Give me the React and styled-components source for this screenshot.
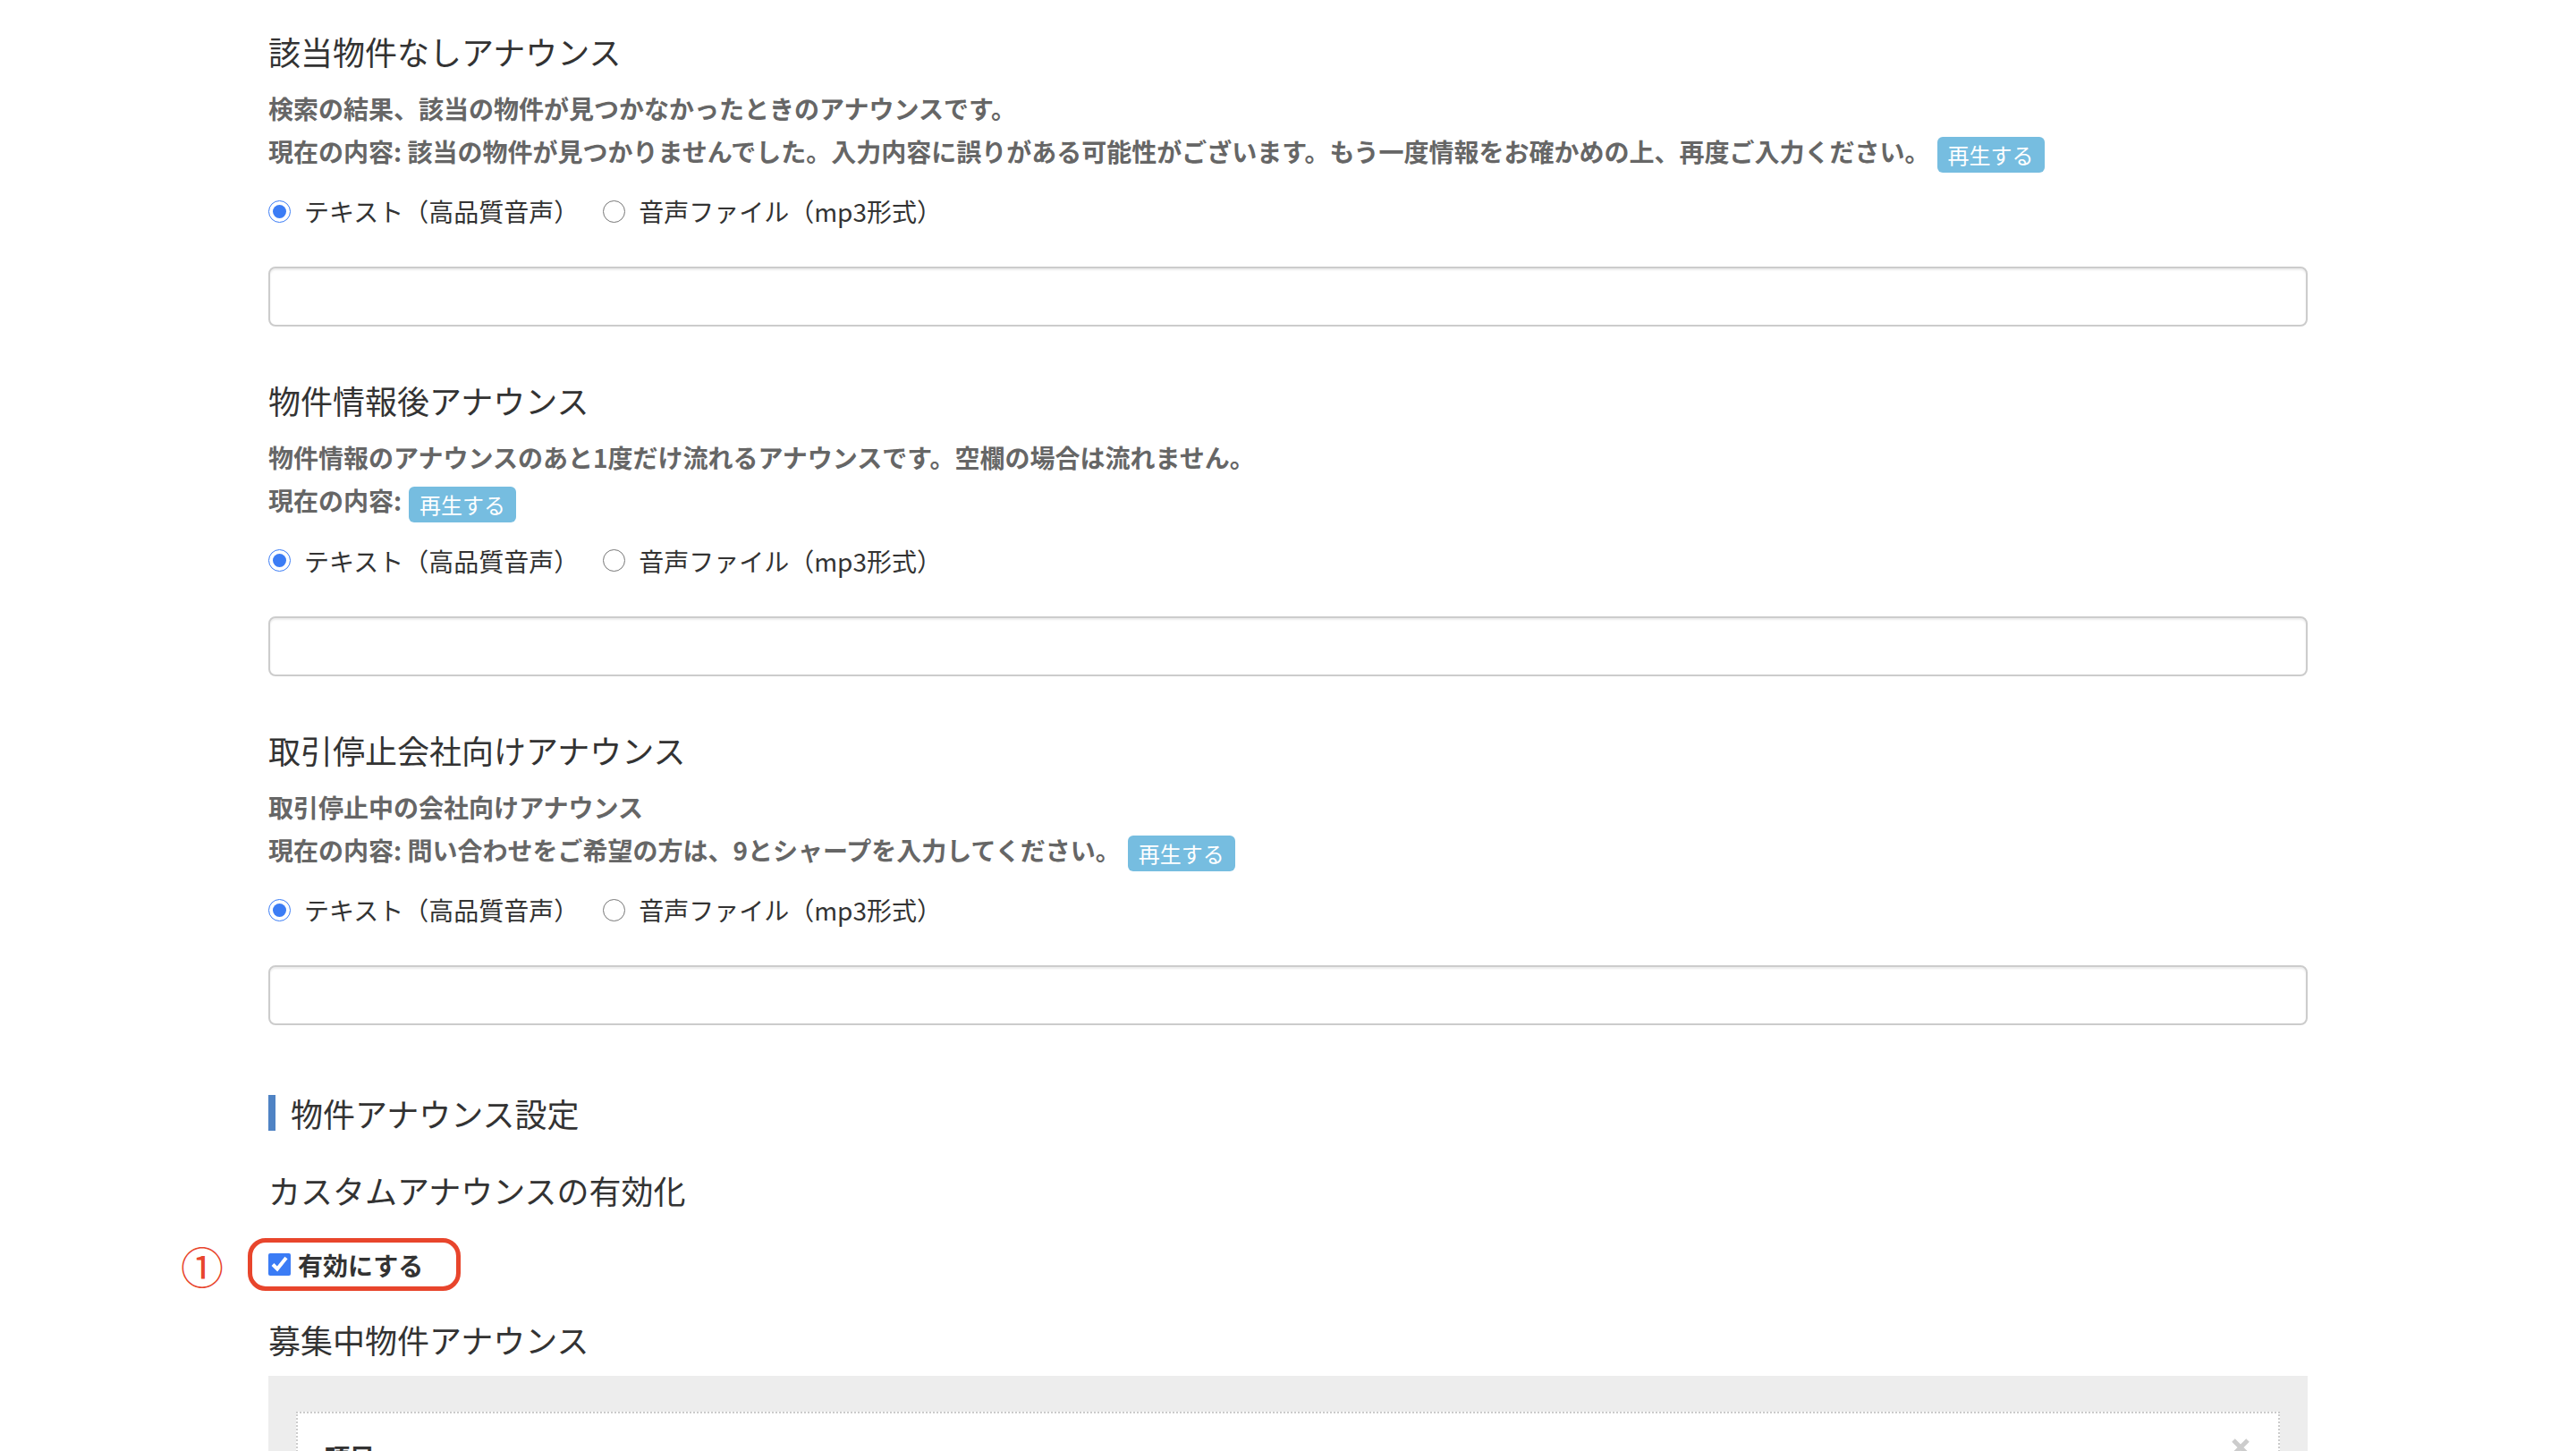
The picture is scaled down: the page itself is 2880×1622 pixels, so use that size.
import React from 'react';
import styled, { createGlobalStyle } from 'styled-components';

const GlobalStyle = createGlobalStyle`
  body {
    margin: 0;
    background: #fff;
    font-family: "Noto Sans CJK JP", "Noto Sans", sans-serif;
    color: #333;
  }
`;

const sections = [
  {
    title: '該当物件なしアナウンス',
    desc: '検索の結果、該当の物件が見つかなかったときのアナウンスです。',
    current: '該当の物件が見つかりませんでした。入力内容に誤りがある可能性がございます。もう一度情報をお確かめの上、再度ご入力ください。',
  },
  {
    title: '物件情報後アナウンス',
    desc: '物件情報のアナウンスのあと1度だけ流れるアナウンスです。空欄の場合は流れません。',
    current: '',
  },
  {
    title: '取引停止会社向けアナウンス',
    desc: '取引停止中の会社向けアナウンス',
    current: '問い合わせをご希望の方は、9とシャープを入力してください。',
  },
];

const AnnounceSection = ({ title, desc, current, name }) => (
  <Section>
    <Title>{title}</Title>
    <Desc>
      <Line>{desc}</Line>
      <Line>
        現在の内容:{current ? ` ${current}` : ''}
        <PlayButton type="button">再生する</PlayButton>
      </Line>
    </Desc>
    <RadioRow>
      <RadioLabel>
        <Radio type="radio" name={name} defaultChecked />
        テキスト（高品質音声）
      </RadioLabel>
      <RadioLabel>
        <Radio type="radio" name={name} />
        音声ファイル（mp3形式）
      </RadioLabel>
    </RadioRow>
    <TextInput type="text" />
  </Section>
);

const App = () => {
  return (
    <>
      <GlobalStyle />
      <Container>
        {sections.map((s, i) => (
          <AnnounceSection key={i} name={`type-${i}`} {...s} />
        ))}

        <BarHeading>物件アナウンス設定</BarHeading>
        <Title>カスタムアナウンスの有効化</Title>
        <CheckRow>
          <Marker>①</Marker>
          <RedFrame />
          <CheckBox type="checkbox" defaultChecked />
          <CheckLabel>有効にする</CheckLabel>
        </CheckRow>

        <Title>募集中物件アナウンス</Title>
        <GrayPanel>
          <ItemCard>
            <CardHead>
              <ItemLabel>項目</ItemLabel>
              <CloseBtn type="button">
                <svg width="20" height="20" viewBox="0 0 20 20">
                  <path d="M2 2 L18 18 M18 2 L2 18" stroke="#cccccc" strokeWidth="5" />
                </svg>
              </CloseBtn>
            </CardHead>
          </ItemCard>
        </GrayPanel>
      </Container>
    </>
  );
};

export default App;

const Container = styled.div`
  width: 2280px;
  margin: 0 auto;
  padding-top: 37px;
`;

const Section = styled.section`
  margin-bottom: 62px;
`;

const Title = styled.h3`
  margin: 0;
  font-size: 36px;
  line-height: 40px;
  font-weight: 400;
  color: #333;
`;

const Desc = styled.div`
  margin-top: 20px;
  font-size: 28px;
  line-height: 48px;
  font-weight: 700;
  color: #666;
`;

const Line = styled.p`
  margin: 0;
`;

const PlayButton = styled.button`
  display: inline-block;
  height: 40px;
  margin-left: 8px;
  padding: 0 12px;
  border: none;
  border-radius: 6px;
  background: #76bde0;
  color: #fff;
  font-family: inherit;
  font-size: 24px;
  line-height: 40px;
  vertical-align: middle;
`;

const RadioRow = styled.div`
  display: flex;
  align-items: center;
  height: 48px;
  margin-top: 19px;
  font-size: 28px;
  color: #333;
`;

const RadioLabel = styled.label`
  display: flex;
  align-items: center;
  gap: 15px;
  margin-right: 27px;
`;

const Radio = styled.input`
  width: 25px;
  height: 25px;
  margin: 0;
  accent-color: #3b7cf5;
`;

const TextInput = styled.input`
  display: block;
  box-sizing: border-box;
  width: 100%;
  height: 67px;
  margin-top: 38px;
  border: 2px solid #ccc;
  border-radius: 8px;
  box-shadow: inset 0 2px 2px rgba(0, 0, 0, 0.075);
  outline: none;
`;

const BarHeading = styled.h2`
  margin: 78px 0 46px;
  padding-left: 17px;
  border-left: 8px solid #4f83c4;
  font-size: 36px;
  line-height: 40px;
  font-weight: 400;
  color: #333;
`;

const CheckRow = styled.div`
  position: relative;
  display: flex;
  align-items: center;
  gap: 8px;
  height: 59px;
  margin: 34px 0;
`;

const RedFrame = styled.div`
  position: absolute;
  left: -23px;
  top: 0;
  width: 238px;
  height: 59px;
  box-sizing: border-box;
  border: 5px solid #e8452c;
  border-radius: 20px;
  pointer-events: none;
`;

const Marker = styled.span`
  position: absolute;
  left: -98px;
  top: 50%;
  transform: translateY(-50%);
  font-size: 48px;
  line-height: 1;
  color: #e8452c;
`;

const CheckBox = styled.input`
  width: 25px;
  height: 25px;
  margin: 0;
  accent-color: #3b7cf5;
`;

const CheckLabel = styled.span`
  font-size: 28px;
  font-weight: 700;
  color: #333;
`;

const GrayPanel = styled.div`
  margin-top: 21px;
  padding: 40px 31px;
  background: #ededed;
`;

const ItemCard = styled.div`
  padding: 28px 32px 40px 30px;
  background: #fff;
  border: 2px dotted #ccc;
`;

const CardHead = styled.div`
  display: flex;
  justify-content: space-between;
  align-items: flex-start;
`;

const ItemLabel = styled.span`
  font-size: 28px;
  line-height: 40px;
  font-weight: 700;
  color: #333;
`;

const CloseBtn = styled.button`
  padding: 0;
  border: none;
  background: transparent;
  line-height: 0;
`;
